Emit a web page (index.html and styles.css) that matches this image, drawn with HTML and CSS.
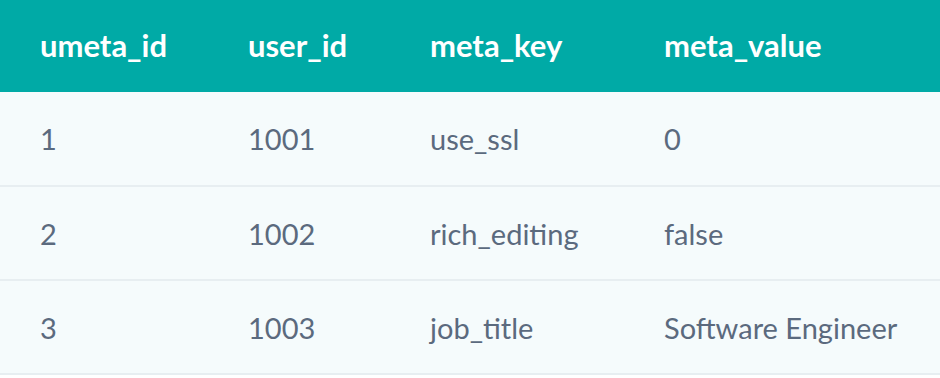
FILE: index.html
```html
<!DOCTYPE html>
<html>
<head>
<meta charset="utf-8">
<link rel="stylesheet" href="styles.css">
</head>
<body>
<table class="meta-table">
  <colgroup>
    <col class="c1"><col class="c2"><col class="c3"><col class="c4">
  </colgroup>
  <thead>
    <tr><th>umeta_id</th><th>user_id</th><th>meta_key</th><th>meta_value</th></tr>
  </thead>
  <tbody>
    <tr><td>1</td><td>1001</td><td>use_ssl</td><td>0</td></tr>
    <tr><td>2</td><td>1002</td><td>rich_editing</td><td>false</td></tr>
    <tr><td>3</td><td>1003</td><td>job_title</td><td>Software Engineer</td></tr>
  </tbody>
</table>
</body>
</html>
```
FILE: styles.css
```css
html, body {
  margin: 0;
  padding: 0;
  background: #ffffff;
}
.meta-table {
  width: 940px;
  border-collapse: collapse;
  table-layout: fixed;
  font-family: "Lato", "Open Sans", sans-serif;
}
.c1 { width: 208px; }
.c2 { width: 182px; }
.c3 { width: 234px; }
.c4 { width: 316px; }
.meta-table th {
  background: #00aaa6;
  color: #ffffff;
  font-weight: 700;
  font-size: 31px;
  text-align: left;
  height: 92px;
  padding: 0 0 3px 40px;
  box-sizing: border-box;
}
.meta-table td {
  background: #f5fbfc;
  color: #5b6a7e;
  font-size: 29px;
  height: 94px;
  padding: 0 0 0 40px;
  border-bottom: 2px solid #e7eef1;
  box-sizing: border-box;
  white-space: nowrap;
}
```
